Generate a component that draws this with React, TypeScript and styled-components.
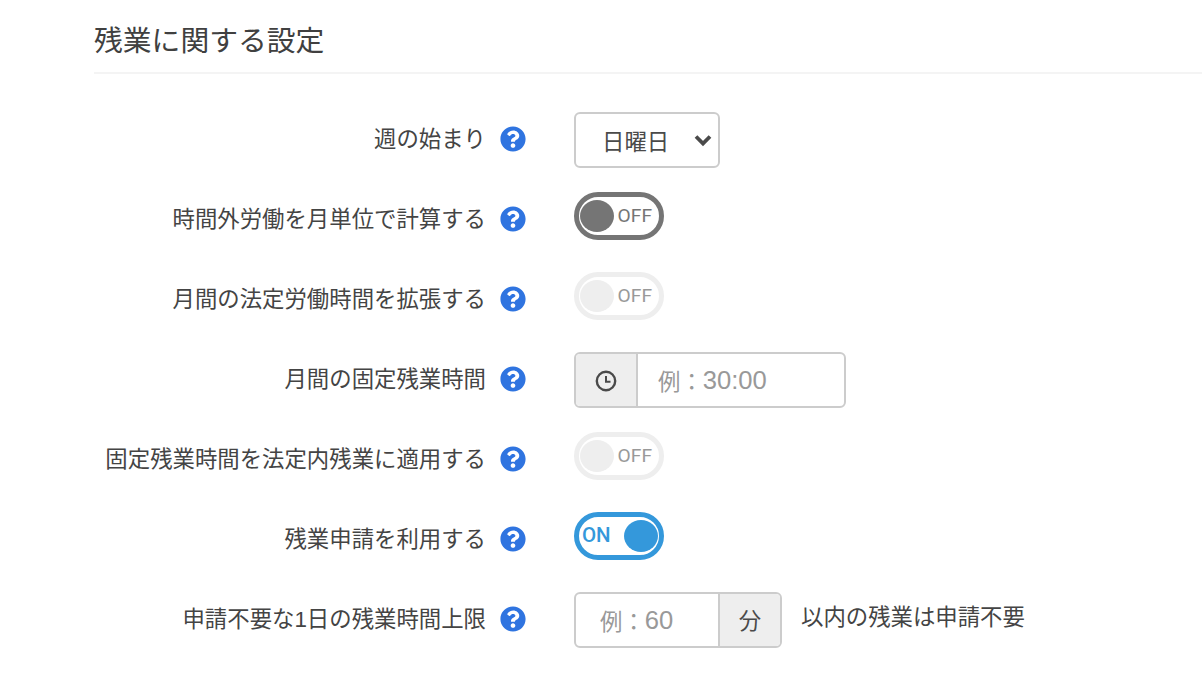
import { createGlobalStyle, styled } from 'styled-components'
import { FaQuestionCircle } from 'react-icons/fa'

const GlobalStyle = createGlobalStyle`
  html, body {
    margin: 0;
    background: #fff;
    overflow: hidden;
  }
  body {
    font-family: "Liberation Sans", "Noto Sans CJK JP", sans-serif;
    color: #4a4a4a;
  }
`

const Page = styled.div`
  width: 1202px;
  height: 698px;
  padding: 22px 0 0 94px;
  box-sizing: border-box;
`

const Heading = styled.h2`
  margin: 0;
  height: 50px;
  font-size: 28.8px;
  line-height: 38px;
  font-weight: 400;
  color: #404040;
  border-bottom: 2px solid #f4f4f4;
  box-sizing: content-box;
`

const Rows = styled.div`
  display: flex;
  flex-direction: column;
  gap: 24px;
  margin-top: 38px;
`

const Row = styled.div`
  display: grid;
  grid-template-columns: 392px 26px 1fr;
  column-gap: 14px;
  height: 56px;
  align-items: start;
`

const Label = styled.div`
  height: 54px;
  line-height: 56px;
  font-size: 22.4px;
  white-space: nowrap;
  text-align: right;
  color: #444;
`

const Help = styled.span`
  display: flex;
  height: 54px;
  align-items: center;
  color: #2f74e0;
  font-size: 26px;
`

const Control = styled.div`
  display: flex;
  align-items: flex-start;
  margin-left: 34px;
`

const Select = styled.div`
  width: 146px;
  height: 56px;
  box-sizing: border-box;
  border: 2px solid #ccc;
  border-radius: 6px;
  display: flex;
  align-items: center;
  justify-content: space-between;
  padding: 0 5px 0 26px;
  font-size: 22.4px;
  color: #4a4a4a;
`

const Toggle = styled.div<{ $tone: string; $on?: boolean }>`
  width: 90px;
  height: 48px;
  box-sizing: border-box;
  border: 5px solid ${(p) => p.$tone};
  border-radius: 24px;
  display: flex;
  flex-direction: ${(p) => (p.$on ? 'row-reverse' : 'row')};
  align-items: center;
  justify-content: space-between;
  padding: 0 ${(p) => (p.$on ? '1px' : '7px')} 0 ${(p) => (p.$on ? '3px' : '1px')};
`

const Knob = styled.span<{ $tone: string }>`
  width: 34px;
  height: 32px;
  border-radius: 50%;
  background: ${(p) => p.$tone};
  flex: none;
`

const ToggleText = styled.span<{ $color: string; $bold?: boolean }>`
  font-family: Roboto, "Liberation Sans", sans-serif;
  font-size: ${(p) => (p.$bold ? '20.5px' : '19.2px')};
  line-height: 30px;
  margin-top: ${(p) => (p.$bold ? '-2px' : '-1px')};
  font-weight: ${(p) => (p.$bold ? 500 : 400)};
  color: ${(p) => p.$color};
`

const InputGroup = styled.div<{ $width: number }>`
  width: ${(p) => p.$width}px;
  height: 56px;
  box-sizing: border-box;
  border: 2px solid #ccc;
  border-radius: 6px;
  display: flex;
  align-items: stretch;
  overflow: hidden;
`

const Addon = styled.div<{ $width: number; $side: 'left' | 'right' }>`
  width: ${(p) => p.$width}px;
  flex: none;
  box-sizing: border-box;
  padding: ${(p) => (p.$side === 'left' ? '0 0 2px' : '2px 0 0')};
  background: #eee;
  display: flex;
  align-items: center;
  justify-content: center;
  color: #4a4a4a;
  font-size: 22.4px;
  border-${(p) => p.$side}: 2px solid #ccc;
`

const Placeholder = styled.div<{ $indent: number }>`
  flex: 1;
  display: flex;
  align-items: center;
  padding-left: ${(p) => p.$indent}px;
  font-size: 22.4px;
  color: #999;
  white-space: nowrap;
`

const Digits = styled.span`
  font-size: 25.6px;
`

const Suffix = styled.span`
  margin-left: 19px;
  height: 52px;
  line-height: 52px;
  font-size: 22.4px;
  color: #444;
`

function ChevronIcon() {
  return (
    <svg width="20" height="14" viewBox="0 0 20 14" fill="none" stroke="#4a4a4a">
      <path d="M3 3.5L10 10.5L17 3.5" strokeWidth="3.8" />
    </svg>
  )
}

function ClockIcon() {
  return (
    <svg width="22" height="22" viewBox="0 0 22 22" fill="none" stroke="#4a4a4a">
      <circle cx="11" cy="11" r="9.2" strokeWidth="2.4" />
      <path d="M11 6V11.7H15.5" strokeWidth="2" />
    </svg>
  )
}

function SwitchOff({ active }: { active?: boolean }) {
  return (
    <Toggle $tone={active ? '#757575' : '#eee'}>
      <Knob $tone={active ? '#757575' : '#eee'} />
      <ToggleText $color={active ? '#757575' : '#999'}>OFF</ToggleText>
    </Toggle>
  )
}

function SettingRow({ label, children }: { label: string; children: React.ReactNode }) {
  return (
    <Row>
      <Label>{label}</Label>
      <Help>
        <FaQuestionCircle />
      </Help>
      <Control>{children}</Control>
    </Row>
  )
}

export default function App() {
  return (
    <Page>
      <GlobalStyle />
      <Heading>残業に関する設定</Heading>
      <Rows>
        <SettingRow label="週の始まり">
          <Select>
            日曜日
            <ChevronIcon />
          </Select>
        </SettingRow>
        <SettingRow label="時間外労働を月単位で計算する">
          <SwitchOff active />
        </SettingRow>
        <SettingRow label="月間の法定労働時間を拡張する">
          <SwitchOff />
        </SettingRow>
        <SettingRow label="月間の固定残業時間">
          <InputGroup $width={272}>
            <Addon $width={62} $side="right">
              <ClockIcon />
            </Addon>
            <Placeholder $indent={20}>例：<Digits>30:00</Digits></Placeholder>
          </InputGroup>
        </SettingRow>
        <SettingRow label="固定残業時間を法定内残業に適用する">
          <SwitchOff />
        </SettingRow>
        <SettingRow label="残業申請を利用する">
          <Toggle $tone="#3498db" $on>
            <Knob $tone="#3498db" />
            <ToggleText $color="#3498db" $bold>ON</ToggleText>
          </Toggle>
        </SettingRow>
        <SettingRow label="申請不要な1日の残業時間上限">
          <InputGroup $width={208}>
            <Placeholder $indent={24}>例：<Digits>60</Digits></Placeholder>
            <Addon $width={62} $side="left">分</Addon>
          </InputGroup>
          <Suffix>以内の残業は申請不要</Suffix>
        </SettingRow>
      </Rows>
    </Page>
  )
}
